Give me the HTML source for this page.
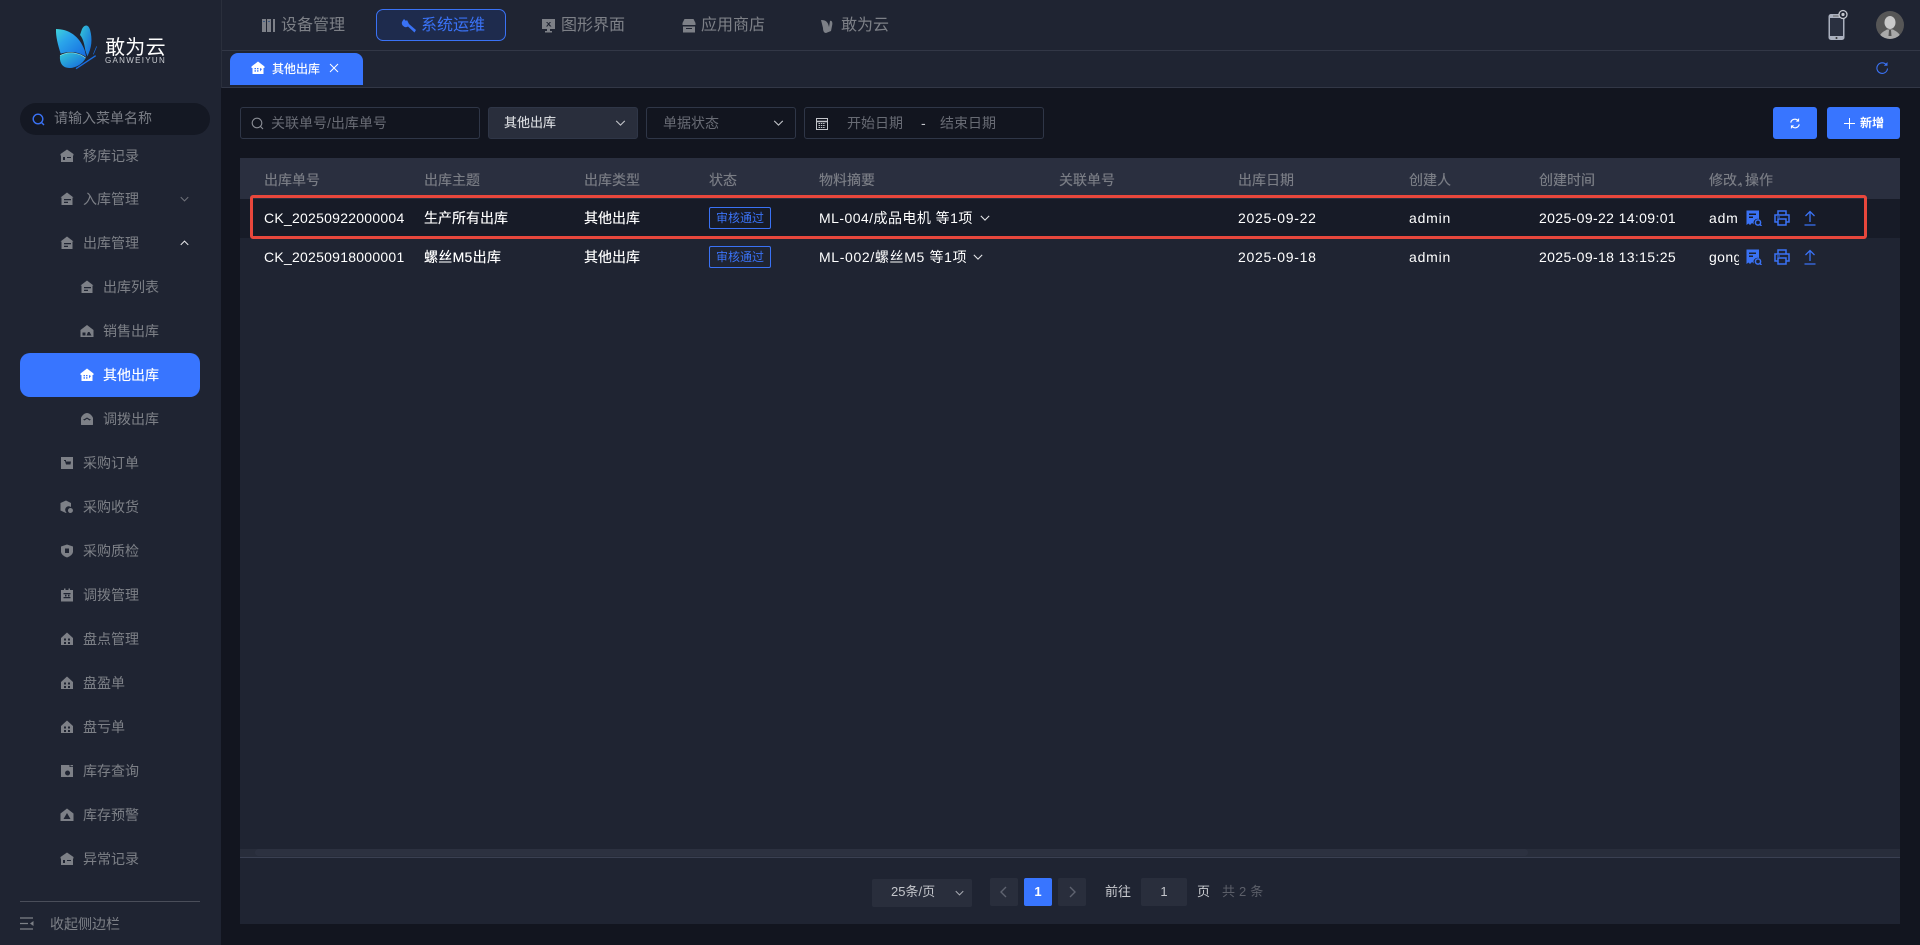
<!DOCTYPE html>
<html lang="zh-CN">
<head>
<meta charset="utf-8">
<title>其他出库</title>
<style>
*{box-sizing:border-box}
html,body{margin:0;padding:0;width:1920px;height:945px;overflow:hidden;background:#12151f;font-family:"Liberation Sans","Noto Sans CJK SC",sans-serif;font-size:14px;color:#fff}
.a{position:absolute}
.t{position:absolute;white-space:nowrap;line-height:20px;height:20px}
svg{position:absolute;display:block;overflow:visible}
.side{color:#7d8087}
.th{color:#7a7d85;text-shadow:0 0 .4px #7a7d85}
.ph{color:#686b74}
.bd{border:1px solid #2f3647;border-radius:3px}
.blue{color:#3a72f5}
.sb{text-shadow:0 0 .4px #fff}
.tag{position:absolute;left:709px;width:62px;height:22px;border:1px solid #3a72f5;border-radius:2px;color:#3a72f5;font-size:12px;line-height:20px;text-align:center}
</style>
</head>
<body>
<svg width="0" height="0" style="position:absolute">
<defs>
<symbol id="h1" viewBox="0 0 14 14"><path fill="currentColor" fill-rule="evenodd" d="M7 .5 13.500 5v1.500H13V13H1V6.500H.5V5ZM3 8v3h2V8ZM7 8v1h4V8Z"/></symbol>
<symbol id="h2" viewBox="0 0 14 14"><path fill="currentColor" fill-rule="evenodd" d="M7 .5 13.500 5.500H12.500V13H1.500V5.500H.5ZM4 7v1.300h7V7ZM4 9.700V11h4V9.700Z"/></symbol>
<symbol id="h3" viewBox="0 0 14 14"><path fill="currentColor" fill-rule="evenodd" d="M7 1 13.500 6V13H.5V6ZM2.500 8.500V11.500H5.500V8.500ZM8 8 6.500 11.500H11.500L9.500 8Z"/></symbol>
<symbol id="h4" viewBox="0 0 14 14"><path fill="currentColor" fill-rule="evenodd" d="M7 .5 13.500 5.500V7H12.500V13H1.500V7H.5V5.500ZM3.500 7v1.300H5V7ZM6 7v1.300H7.500V7ZM3.500 9.300v1.300H5V9.300ZM6 9.300v1.300H7.500V9.300ZM9 7v3.500L11 8Z"/></symbol>
<symbol id="h5" viewBox="0 0 14 14"><path fill="currentColor" fill-rule="evenodd" d="M1 6C2 3 5 1 7 1s5 2 6 5v6.500Q13 13 12.500 13H1.500Q1 13 1 12.500ZM3 7.500 4.500 8.500 7 6.800 9.500 8.500 11 7.500 9.500 7 7 5.500 4.500 7Z"/></symbol>
<symbol id="h6" viewBox="0 0 14 14"><path fill="currentColor" fill-rule="evenodd" d="M1 1H13V13H1ZM4 4v1H5L6 8.500H10.500L11 5.500H6V4Z"/></symbol>
<symbol id="h7" viewBox="0 0 14 14"><path fill="currentColor" fill-rule="evenodd" d="M6 .5 11 3V7A3.500 3.500 0 0 0 6.500 12.500L6 13 .5 10.500V3ZM10.500 8A2.500 2.500 0 1 1 10.400 13 2.500 2.500 0 0 1 10.500 8Z"/></symbol>
<symbol id="h8" viewBox="0 0 14 14"><path fill="currentColor" fill-rule="evenodd" d="M7 .5 13 2.500V8Q12.500 11.500 7 13.500 1.500 11.500 1 8V2.500ZM5 4.500V9H9V4.500Z"/></symbol>
<symbol id="h9" viewBox="0 0 14 14"><path fill="currentColor" fill-rule="evenodd" d="M1 2H4V.5H5.500V2H8.500V.5H10V2H13V13.500H1ZM3.500 5V6.300H10.500V5ZM3.500 9V10.300H10.500V9ZM5 6.800V8.500H6.500V6.800ZM8 6.800V8.500H9.500V6.800Z"/></symbol>
<symbol id="h10" viewBox="0 0 14 14"><path fill="currentColor" fill-rule="evenodd" d="M7 .5 13 6V13H1V6ZM4 6.500V8.500H6V6.500ZM8 6.500V8.500H10V6.500ZM4 10V12H6V10ZM8 10V12H10V10Z"/></symbol>
<symbol id="h11" viewBox="0 0 14 14"><path fill="currentColor" fill-rule="evenodd" d="M1 1H9.500V3H13V13H1ZM10.500 1H13V2.200H10.500ZM7.500 6.500A2.500 2.500 0 1 0 7.600 11.500 2.500 2.500 0 0 0 7.500 6.500Z"/></symbol>
<symbol id="h12" viewBox="0 0 14 14"><path fill="currentColor" fill-rule="evenodd" d="M7 .5 13.500 5.500V13H.5V5.500ZM7 5 3.500 11H10.500Z"/></symbol>
<symbol id="doc" viewBox="0 0 16 16"><path fill="#3a72f5" fill-rule="evenodd" d="M.5.500H13V9A4 4 0 0 0 8 14.500L6 13 4 15 2.500 13.500.5 15ZM3 3.500V5H10V3.500ZM3 6.500V8H7V6.500Z"/><circle cx="12" cy="12.500" r="2.600" fill="none" stroke="#3a72f5" stroke-width="1.500"/><path d="M14 14.500 15.500 16" stroke="#3a72f5" stroke-width="1.500"/></symbol>
<symbol id="prn" viewBox="0 0 16 16"><path fill="none" stroke="#3a72f5" stroke-width="1.500" d="M4 5V1H12V5M4 12H1V5H15V12H12M4 9H12V15H4Z"/><path d="M3 7H6" stroke="#3a72f5"/></symbol>
<symbol id="upl" viewBox="0 0 12 16"><path fill="none" stroke="#3a72f5" stroke-width="1.300" d="M6 12V1.500M1.500 6 6 1.500 10.500 6M.5 15H11.500"/></symbol>
<symbol id="chev" viewBox="0 0 12 7"><path fill="none" stroke="currentColor" stroke-width="1.300" d="M1 1 6 6 11 1"/></symbol>
</defs>
</svg>

<!-- sidebar -->
<div class="a" style="left:0;top:0;width:221px;height:945px;background:#1f2432"></div>
<svg style="left:40px;top:15px" width="140" height="70" viewBox="0 0 420 210">
<defs>
<linearGradient id="g1" x1="0" y1="0" x2="1" y2="1"><stop offset="0" stop-color="#3fd3da"/><stop offset=".35" stop-color="#2aa4ea"/><stop offset="1" stop-color="#1468e0"/></linearGradient>
<linearGradient id="g2" x1="0" y1="0" x2="1" y2="1"><stop offset="0" stop-color="#35c9d8"/><stop offset="1" stop-color="#1363dd"/></linearGradient>
</defs>
<path fill="url(#g2)" d="M126 42C133 28 145 27 150 44 158 72 155 100 142 124L136 106C133 86 128 68 120 60Z"/>
<path fill="url(#g1)" d="M48 42C85 42 118 62 134 106L139 126C112 108 86 108 62 116 54 90 47 65 48 42Z"/>
<path fill="url(#g2)" d="M60 122C85 108 115 112 137 129 127 150 100 163 80 158 65 155 58 140 60 122Z"/>
<path fill="none" stroke="#8fe6e0" stroke-width="2" d="M60 122C85 108 115 112 137 129"/>
<path stroke="#1a6fe4" stroke-width="4" d="M108 161 167 122"/>
<path stroke="#1a6fe4" stroke-width="2" d="M160 118 170 94"/>
</svg>
<div class="t" style="left:105px;top:35px;font-size:20px;line-height:26px;height:26px;letter-spacing:.3px;color:#fff">敢为云</div>
<div class="t" style="left:105px;top:56px;font-size:8px;line-height:10px;height:10px;letter-spacing:1.3px;color:#c8cbd0">GANWEIYUN</div>

<div class="a" style="left:20px;top:103px;width:190px;height:32px;border-radius:16px;background:#141823"></div>
<svg style="left:32px;top:113px" width="13" height="13" viewBox="0 0 13 13"><circle cx="6" cy="6" r="4.800" fill="none" stroke="#3a72f5" stroke-width="1.400"/><path d="M9.500 9.500 12 12" stroke="#3a72f5" stroke-width="1.400"/></svg>
<div class="t" style="left:54px;top:108px;color:#7a7d85">请输入菜单名称</div>

<div class="side">
<svg style="left:60px;top:149px;color:#7d8087" width="14" height="14"><use href="#h1"/></svg><div class="t" style="left:83px;top:146px">移库记录</div>
<svg style="left:60px;top:192px;color:#7d8087" width="14" height="14"><use href="#h2"/></svg><div class="t" style="left:83px;top:189px">入库管理</div>
<svg style="left:180px;top:196px;color:#6f727a" width="9" height="6"><use href="#chev"/></svg>
<svg style="left:60px;top:236px;color:#7d8087" width="14" height="14"><use href="#h2"/></svg><div class="t" style="left:83px;top:233px">出库管理</div>
<svg style="left:180px;top:240px;color:#e6e7ea;transform:rotate(180deg)" width="9" height="6"><use href="#chev"/></svg>
<svg style="left:80px;top:280px;color:#7d8087" width="14" height="14"><use href="#h2"/></svg><div class="t" style="left:103px;top:277px">出库列表</div>
<svg style="left:80px;top:324px;color:#7d8087" width="14" height="14"><use href="#h3"/></svg><div class="t" style="left:103px;top:321px">销售出库</div>
<div class="a" style="left:20px;top:353px;width:180px;height:44px;border-radius:10px;background:#3875ff"></div>
<svg style="left:80px;top:368px;color:#fff" width="14" height="14"><use href="#h4"/></svg><div class="t sb" style="left:103px;top:365px;color:#fff">其他出库</div>
<svg style="left:80px;top:412px;color:#7d8087" width="14" height="14"><use href="#h5"/></svg><div class="t" style="left:103px;top:409px">调拨出库</div>
<svg style="left:60px;top:456px;color:#7d8087" width="14" height="14"><use href="#h6"/></svg><div class="t" style="left:83px;top:453px">采购订单</div>
<svg style="left:60px;top:500px;color:#7d8087" width="14" height="14"><use href="#h7"/></svg><div class="t" style="left:83px;top:497px">采购收货</div>
<svg style="left:60px;top:544px;color:#7d8087" width="14" height="14"><use href="#h8"/></svg><div class="t" style="left:83px;top:541px">采购质检</div>
<svg style="left:60px;top:588px;color:#7d8087" width="14" height="14"><use href="#h9"/></svg><div class="t" style="left:83px;top:585px">调拨管理</div>
<svg style="left:60px;top:632px;color:#7d8087" width="14" height="14"><use href="#h10"/></svg><div class="t" style="left:83px;top:629px">盘点管理</div>
<svg style="left:60px;top:676px;color:#7d8087" width="14" height="14"><use href="#h10"/></svg><div class="t" style="left:83px;top:673px">盘盈单</div>
<svg style="left:60px;top:720px;color:#7d8087" width="14" height="14"><use href="#h10"/></svg><div class="t" style="left:83px;top:717px">盘亏单</div>
<svg style="left:60px;top:764px;color:#7d8087" width="14" height="14"><use href="#h11"/></svg><div class="t" style="left:83px;top:761px">库存查询</div>
<svg style="left:60px;top:808px;color:#7d8087" width="14" height="14"><use href="#h12"/></svg><div class="t" style="left:83px;top:805px">库存预警</div>
<svg style="left:60px;top:852px;color:#7d8087" width="14" height="14"><use href="#h1"/></svg><div class="t" style="left:83px;top:849px">异常记录</div>
</div>
<div class="a" style="left:20px;top:901px;width:180px;height:1px;background:#4a4e5a"></div>
<svg style="left:20px;top:917px" width="14" height="13" viewBox="0 0 14 13"><path fill="none" stroke="#7d8087" stroke-width="1.200" d="M0 1H13M0 6.500H8M0 12H13"/><path fill="#7d8087" d="M13.500 4V9L10 6.500Z"/></svg>
<div class="t" style="left:50px;top:914px;color:#7d8087">收起侧边栏</div>

<!-- top nav -->
<div class="a" style="left:221px;top:0;width:1699px;height:50px;background:#1f2432"></div>
<div class="a" style="left:221px;top:50px;width:1699px;height:1px;background:#323746"></div>
<div class="a" style="left:221px;top:51px;width:1699px;height:36px;background:#1f2432"></div>
<div class="a" style="left:221px;top:87px;width:1699px;height:1px;background:#323746"></div>
<div class="a" style="left:221px;top:0;width:1px;height:88px;background:#2a2f3c"></div>

<svg style="left:262px;top:19px" width="14" height="13" viewBox="0 0 14 13"><path fill="#7d8088" d="M0 0H4V13H0ZM5 0H9V13H5ZM11 0H13V13H11Z"/><path fill="#3f5a80" d="M1 2H3V3H1ZM6 2H8V3H6Z"/></svg>
<div class="t" style="left:281px;top:16px;font-size:16px;color:#7d8087">设备管理</div>

<div class="a" style="left:376px;top:9px;width:130px;height:32px;border:1px solid #3a72f5;border-radius:7px;background:#1e2b4d"></div>
<svg style="left:402px;top:19px" width="15" height="14" viewBox="0 0 15 14"><path fill="#3a72f5" d="M2 0 4 2 5 1 6 3 7 5 14 11 12.500 13.500 6 7.500A4 4 0 0 1 .5 2Z"/></svg>
<div class="t" style="left:421px;top:16px;font-size:16px;color:#3a72f5">系统运维</div>

<svg style="left:542px;top:19px" width="14" height="14" viewBox="0 0 14 14"><path fill="#7d8087" fill-rule="evenodd" d="M0 0H13V10H8V12H10V13.500H3V12H5V10H0ZM4 3 6 5 4 7.500H5.500L6.500 6 8 7.500H9.500L7.300 5 9 3H7.800L6.500 4.300 5.300 3Z"/></svg>
<div class="t" style="left:561px;top:16px;font-size:16px;color:#7d8087">图形界面</div>

<svg style="left:682px;top:19px" width="14" height="14" viewBox="0 0 14 14"><path fill="#7d8087" fill-rule="evenodd" d="M2.500 0H11.500L13.500 4V6H.5V4ZM1 7.500H13V13.500H1ZM4 9V10H10V9Z"/></svg>
<div class="t" style="left:701px;top:16px;font-size:16px;color:#7d8087">应用商店</div>

<svg style="left:821px;top:19px" width="14" height="14" viewBox="0 0 14 14"><path fill="#7d8087" d="M0 1C5 1 7 3 8 8L9 2C11 1 12 4 11 7L10 12 5 14C3 14 2 12 2 9Z"/></svg>
<div class="t" style="left:841px;top:16px;font-size:16px;color:#7d8087">敢为云</div>

<!-- phone + avatar -->
<svg style="left:1826px;top:10px" width="24" height="32" viewBox="0 0 24 32">
<rect x="2.500" y="4" width="16" height="26" rx="2.500" fill="#aab0be"/>
<rect x="4" y="8" width="13" height="18" fill="#2a3040"/>
<circle cx="10.500" cy="28" r="1" fill="#333"/>
<rect x="7" y="5.500" width="6" height="1" fill="#666"/>
<circle cx="17" cy="4.500" r="4" fill="#1f2432" stroke="#c4c7ce" stroke-width="1.300"/>
<circle cx="17" cy="4.500" r="1.600" fill="#c4c7ce"/>
</svg>
<svg style="left:1876px;top:11px" width="28" height="28" viewBox="0 0 28 28">
<clipPath id="cp"><circle cx="14" cy="14" r="14"/></clipPath>
<circle cx="14" cy="14" r="14" fill="#565656"/>
<g clip-path="url(#cp)"><ellipse cx="14" cy="11.500" rx="5.500" ry="6.500" fill="#c9c9c9"/><path fill="#a9a9a9" d="M3 28C4 21 9 20 11 18.500H17C19 20 24 21 25 28Z"/><path fill="#555" d="M13 19H15L15.500 25H12.500Z"/></g>
</svg>

<!-- tab -->
<div class="a" style="left:230px;top:53px;width:133px;height:32px;background:#3875ff;border-radius:8px 8px 0 0"></div>
<svg style="left:251px;top:61px;color:#fff" width="14" height="14"><use href="#h4"/></svg>
<div class="t sb" style="left:272px;top:59px;font-size:12px">其他出库</div>
<svg style="left:330px;top:64px" width="8" height="8" viewBox="0 0 8 8"><path stroke="#fff" stroke-width="1" d="M0 0 8 8M8 0 0 8"/></svg>
<svg style="left:1876px;top:62px" width="12" height="12" viewBox="0 0 12 12"><path fill="none" stroke="#3a72f5" stroke-width="1.100" d="M10.500 3A5.300 5.300 0 1 0 11.500 6.500"/><path fill="#3a72f5" d="M11.500 0V3.800H7.800Z"/></svg>

<!-- filter bar -->
<div class="a bd" style="left:240px;top:107px;width:240px;height:32px"></div>
<svg style="left:251px;top:117px" width="13" height="13" viewBox="0 0 13 13"><circle cx="6" cy="6" r="4.800" fill="none" stroke="#8a8d95" stroke-width="1.100"/><path d="M9.500 9.500 12 12" stroke="#8a8d95" stroke-width="1.100"/></svg>
<div class="t ph" style="left:271px;top:113px">关联单号/出库单号</div>

<div class="a bd" style="left:488px;top:107px;width:150px;height:32px;background:#292e3c"></div>
<div class="t" style="left:504px;top:113px;font-size:13px;text-shadow:0 0 .4px #d7d9dd;color:#d7d9dd">其他出库</div>
<svg style="left:615px;top:120px;color:#c3c5ca" width="11" height="6"><use href="#chev"/></svg>

<div class="a bd" style="left:646px;top:107px;width:150px;height:32px"></div>
<div class="t ph" style="left:663px;top:113px">单据状态</div>
<svg style="left:773px;top:120px;color:#c3c5ca" width="11" height="6"><use href="#chev"/></svg>

<div class="a bd" style="left:804px;top:107px;width:240px;height:32px"></div>
<svg style="left:816px;top:117px" width="12" height="13" viewBox="0 0 12 13"><rect x=".5" y="1.500" width="11" height="11" fill="none" stroke="#c3c5ca"/><path d="M.5 4.500H11.500" stroke="#c3c5ca" stroke-width="1.500"/><path d="M2.500 6.500H9.500M2.500 8.500H9.500M2.500 10.500H9.500" stroke="#c3c5ca" stroke-dasharray="1.500 .8"/></svg>
<div class="t ph" style="left:847px;top:113px">开始日期</div>
<div class="t" style="left:921px;top:113px;color:#c3c5ca">-</div>
<div class="t ph" style="left:940px;top:113px">结束日期</div>

<div class="a" style="left:1773px;top:107px;width:44px;height:32px;background:#3875ff;border-radius:3px"></div>
<svg style="left:1790px;top:118px" width="10" height="11" viewBox="0 0 11 12"><path fill="none" stroke="#fff" stroke-width="1.300" d="M.8 5A4.700 4.700 0 0 1 9 3M10.200 7A4.700 4.700 0 0 1 2 9"/><path fill="#fff" d="M10 0V4H6.500ZM1 12V8H4.500Z"/></svg>
<div class="a" style="left:1827px;top:107px;width:73px;height:32px;background:#3875ff;border-radius:3px"></div>
<svg style="left:1844px;top:118px" width="11" height="11" viewBox="0 0 11 11"><path stroke="#fff" d="M5.500 0V11M0 5.500H11"/></svg>
<div class="t" style="left:1860px;top:113px;font-size:12px;font-weight:700;letter-spacing:0">新增</div>

<!-- table -->
<div class="a" style="left:240px;top:158px;width:1660px;height:766px;background:#1f2432"></div>
<div class="a" style="left:240px;top:158px;width:1660px;height:41px;background:#2a2f3f"></div>
<div class="a" style="left:240px;top:199px;width:1660px;height:39px;background:#171b27"></div>

<div class="t th" style="left:264px;top:170px">出库单号</div>
<div class="t th" style="left:424px;top:170px">出库主题</div>
<div class="t th" style="left:584px;top:170px">出库类型</div>
<div class="t th" style="left:709px;top:170px">状态</div>
<div class="t th" style="left:819px;top:170px">物料摘要</div>
<div class="t th" style="left:1059px;top:170px">关联单号</div>
<div class="t th" style="left:1238px;top:170px">出库日期</div>
<div class="t th" style="left:1409px;top:170px">创建人</div>
<div class="t th" style="left:1539px;top:170px">创建时间</div>
<div class="t th" style="left:1709px;top:170px;width:32px;overflow:hidden">修改人</div>
<div class="t th" style="left:1739px;top:170px;font-size:14px">,</div>
<div class="t th" style="left:1745px;top:170px">操作</div>

<!-- row 1 -->
<div class="t" style="left:264px;top:208px;letter-spacing:.25px">CK_20250922000004</div>
<div class="t sb" style="left:424px;top:208px">生产所有出库</div>
<div class="t sb" style="left:584px;top:208px">其他出库</div>
<div class="tag" style="top:207px">审核通过</div>
<div class="t" style="left:819px;top:208px;letter-spacing:.45px">ML-004/成品电机 等1项</div>
<svg style="left:980px;top:215px;color:#e6e7ea" width="10" height="6"><use href="#chev"/></svg>
<div class="t" style="left:1238px;top:208px;letter-spacing:.7px">2025-09-22</div>
<div class="t" style="left:1409px;top:208px;letter-spacing:.8px">admin</div>
<div class="t" style="left:1539px;top:208px;letter-spacing:.37px">2025-09-22 14:09:01</div>
<div class="t" style="left:1709px;top:208px;width:30px;overflow:hidden;letter-spacing:.8px">admin</div>
<svg style="left:1746px;top:210px" width="16" height="16"><use href="#doc"/></svg>
<svg style="left:1774px;top:210px" width="16" height="16"><use href="#prn"/></svg>
<svg style="left:1804px;top:210px" width="12" height="16"><use href="#upl"/></svg>

<!-- row 2 -->
<div class="t" style="left:264px;top:247px;letter-spacing:.25px">CK_20250918000001</div>
<div class="t sb" style="left:424px;top:247px;letter-spacing:.3px">螺丝M5出库</div>
<div class="t sb" style="left:584px;top:247px">其他出库</div>
<div class="tag" style="top:246px">审核通过</div>
<div class="t" style="left:819px;top:247px;letter-spacing:.65px">ML-002/螺丝M5 等1项</div>
<svg style="left:973px;top:254px;color:#e6e7ea" width="10" height="6"><use href="#chev"/></svg>
<div class="t" style="left:1238px;top:247px;letter-spacing:.7px">2025-09-18</div>
<div class="t" style="left:1409px;top:247px;letter-spacing:.8px">admin</div>
<div class="t" style="left:1539px;top:247px;letter-spacing:.37px">2025-09-18 13:15:25</div>
<div class="t" style="left:1709px;top:247px;width:30px;overflow:hidden;letter-spacing:.4px">gongyi</div>
<svg style="left:1746px;top:249px" width="16" height="16"><use href="#doc"/></svg>
<svg style="left:1774px;top:249px" width="16" height="16"><use href="#prn"/></svg>
<svg style="left:1804px;top:249px" width="12" height="16"><use href="#upl"/></svg>

<!-- highlight -->
<div class="a" style="left:250px;top:195px;width:1617px;height:44px;border:3px solid #e8473c;border-radius:3px"></div>

<!-- scrollbar -->
<div class="a" style="left:240px;top:849px;width:1660px;height:8px;background:#282d3b"></div>
<div class="a" style="left:255px;top:849px;width:1273px;height:7px;background:#2c3140;border-radius:4px"></div>
<div class="a" style="left:240px;top:857px;width:1660px;height:1px;background:#3a4052"></div>

<!-- pagination -->
<div class="a" style="left:872px;top:879px;width:100px;height:28px;background:#292e3c;border-radius:2px"></div>
<div class="t" style="left:891px;top:882px;font-size:13px;color:#c3c5ca">25条/页</div>
<svg style="left:955px;top:890px;color:#a8abb2" width="9" height="6"><use href="#chev"/></svg>
<div class="a" style="left:990px;top:878px;width:28px;height:28px;background:#292e3c;border-radius:2px"></div>
<svg style="left:1000px;top:886px" width="7" height="12" viewBox="0 0 7 12"><path fill="none" stroke="#5f6370" stroke-width="1.400" d="M6 1 1 6 6 11"/></svg>
<div class="a" style="left:1024px;top:878px;width:28px;height:28px;background:#3875ff;border-radius:2px;text-align:center;line-height:28px;font-size:13px;font-weight:700">1</div>
<div class="a" style="left:1058px;top:878px;width:28px;height:28px;background:#292e3c;border-radius:2px"></div>
<svg style="left:1069px;top:886px" width="7" height="12" viewBox="0 0 7 12"><path fill="none" stroke="#5f6370" stroke-width="1.400" d="M1 1 6 6 1 11"/></svg>
<div class="t" style="left:1105px;top:882px;font-size:13px;color:#c9cbd0">前往</div>
<div class="a" style="left:1141px;top:878px;width:46px;height:28px;background:#292e3c;border-radius:2px;text-align:center;line-height:28px;font-size:13px;color:#c3c5ca">1</div>
<div class="t" style="left:1197px;top:882px;font-size:13px;color:#c9cbd0">页</div>
<div class="t" style="left:1222px;top:882px;font-size:13px;color:#5c5f69;letter-spacing:.2px">共 2 条</div>
</body>
</html>
